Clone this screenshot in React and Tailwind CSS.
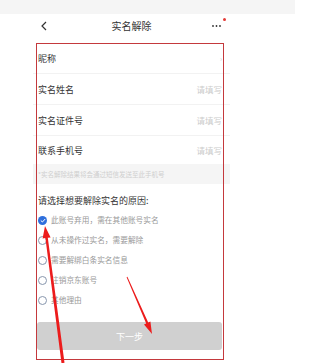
import React from "react";

const reasons = [
  "此账号弃用，需在其他账号实名",
  "从未操作过实名，需要解除",
  "需要解绑白条实名信息",
  "注销京东账号",
  "其他理由",
];

const rows = [
  { label: "昵称", arrow: true },
  { label: "实名姓名" },
  { label: "实名证件号" },
  { label: "联系手机号", last: true },
];

const Arrows = () => (
  <svg
    className="absolute left-0 top-0 pointer-events-none"
    width="295"
    height="363"
    viewBox="0 0 295 363"
  >
    <polygon
      points="45,226 50.6,237.4 47.8,237.7 64.5,362.8 61.5,363.2 45.4,238.1 42.6,238.4"
      fill="#ec1c1c"
    />
    <polygon
      points="152,334 150.4,321.6 148.2,322.6 127.4,276.8 126.6,277.2 146.2,323.4 144,324.4"
      fill="#ec1c1c"
    />
  </svg>
);

const App = () => {
  return (
    <div className="relative w-[295px] h-[363px] bg-white overflow-hidden font-['Noto_Sans_CJK_SC',sans-serif] text-[#333]">
      <div className="h-[14px] bg-[#f5f5f5]"></div>

      <div className="ml-[33px] w-[197px]">
        <div className="relative h-[24px] flex items-center justify-center">
          <svg
            className="absolute left-[8px] top-[7px]"
            width="6"
            height="10"
            viewBox="0 0 6 10"
          >
            <path d="M5 1 L1 5 L5 9" fill="none" stroke="#333" strokeWidth="1.2" />
          </svg>
          <span className="text-[10px] leading-none">实名解除</span>
          <svg
            className="absolute left-[178px] top-[9px]"
            width="16"
            height="6"
            viewBox="0 0 16 6"
          >
            <circle cx="2" cy="3" r="0.9" fill="#333" />
            <circle cx="5.5" cy="3" r="0.9" fill="#333" />
            <circle cx="9" cy="3" r="0.9" fill="#333" />
            <circle cx="13" cy="0" r="0" fill="none" />
          </svg>
          <span className="absolute left-[189.5px] top-[3.5px] w-[3.5px] h-[3.5px] rounded-full bg-[#e53935]"></span>
        </div>
        <div className="h-[5px]"></div>

        {rows.map((r) => (
          <div
            key={r.label}
            className={
              r.last
                ? "h-[28px] flex items-center justify-between pl-[5px] pr-[8px]"
                : "h-[31px] flex items-center justify-between pl-[5px] pr-[8px] border-b border-[#f2f2f2]"
            }
          >
            <span className="text-[9px] leading-none">{r.label}</span>
            {r.arrow ? (
              <span className="text-[7px] text-[#d0d0d0] leading-none">›</span>
            ) : (
              <span className="text-[8.5px] text-[#cccccc] leading-none">请填写</span>
            )}
          </div>
        ))}

        <div className="h-[20px] bg-[#f5f5f5] flex items-center pl-[5px]">
          <span className="text-[6.5px] text-[#cfcfcf] leading-none">
            *实名解除结果将会通过短信发送至此手机号
          </span>
        </div>

        <div className="pt-[10px] pb-[2px] pl-[5px] text-[9px] leading-[14px]">
          请选择想要解除实名的原因:
        </div>

        {reasons.map((t, i) => (
          <div key={t} className="h-[20px] flex items-center pl-[5px] gap-[4px]">
            {i === 0 ? (
              <span className="w-[9px] h-[9px] rounded-full bg-[#2f6fdc] flex items-center justify-center">
                <svg width="6" height="5" viewBox="0 0 6 5">
                  <path d="M0.8 2.5 L2.4 4 L5.2 1" fill="none" stroke="#fff" strokeWidth="1" />
                </svg>
              </span>
            ) : (
              <span className="w-[9px] h-[9px] rounded-full border border-[#8796ad]"></span>
            )}
            <span className="text-[7.7px] text-[#999] leading-none">{t}</span>
          </div>
        ))}

        <div className="mt-[12px] ml-[4px] w-[185px] h-[28px] rounded-[3px] bg-[#d0d0d0] flex items-center justify-center">
          <span className="text-[9px] text-white leading-none">下一步</span>
        </div>
      </div>

      <div className="absolute left-[36px] top-[43px] w-[188px] h-[317px] border-[1.5px] border-[#c4393d] pointer-events-none"></div>

      <Arrows />
    </div>
  );
};

export default App;
